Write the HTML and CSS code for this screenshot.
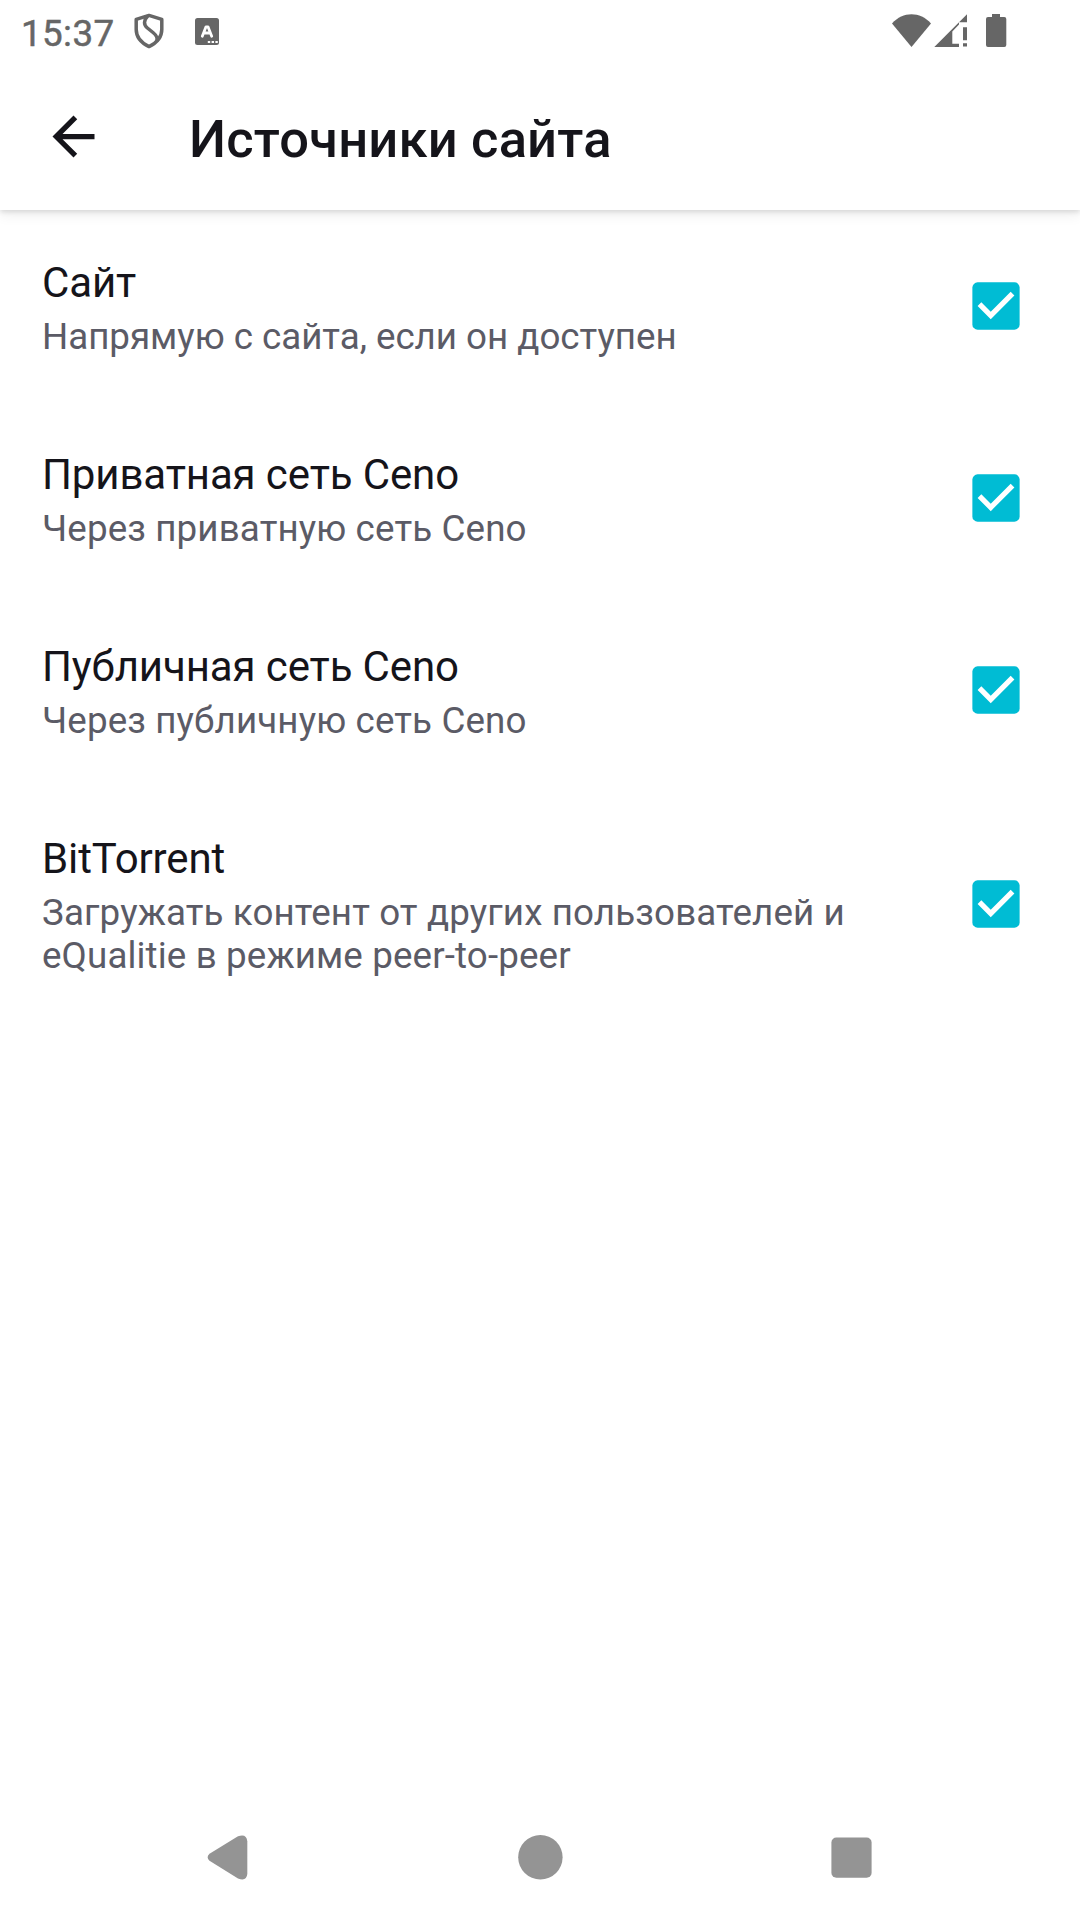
FILE: index.html
```html
<!DOCTYPE html>
<html lang="ru">
<head>
<meta charset="utf-8">
<title>Источники сайта</title>
<link rel="stylesheet" href="styles.css">
</head>
<body>
<div class="screen">
  <div class="status-bar">
    <span class="clock">15:37</span>
    <svg class="status-shield" viewBox="0 0 32 36">
      <path d="M16 2.4 28.8 6.4V16.5C28.8 24 23.5 30 16 33.6 8.5 30 3.2 24 3.2 16.5V6.4Z"/>
      <path d="M14.8 2.8C10.6 7.5 10.4 11.5 14.4 15L20 19.5C24 22.8 25 25.5 23.6 28.3"/>
    </svg>
    <svg class="status-app" viewBox="0 0 24 27">
      <rect width="24" height="27" rx="2.5" fill="#666"/>
      <path d="M7.3 18.2 11 8.8H13L16.7 18.2M8.8 15H15.2" fill="none" stroke="#fff" stroke-width="2.8" stroke-linecap="round" stroke-linejoin="round"/>
      <path d="M12.8 23h2.4v2h-2.4zM16.6 23h2.4v2h-2.4zM20.4 23h2.4v2h-2.4z" fill="#fff"/>
    </svg>
    <svg class="status-system" viewBox="0 0 116 34">
      <path d="M0 9.500C11-2.7 28-2.7 39 9.5L19.5 33Z"/>
      <path d="M42.3 33 75 .2V8.3H67V10.5L60.3 17.5V29.7H67V33Z"/>
      <path d="M71 13.3h4v13h-4zM71 29.3h4V32.5h-4z"/>
      <path d="M100 0h8v3h4.300q2 0 2 2V31q0 2-2 2H96q-2 0-2-2V5q0-2 2-2h4z"/>
    </svg>
  </div>
  <header class="toolbar">
    <svg class="back" viewBox="0 0 24 24"><path d="M20 11H7.83l5.59-5.59L12 4l-8 8 8 8 1.41-1.41L7.83 13H20z"/></svg>
    <h1 class="heading">Источники сайта</h1>
  </header>
  <main class="preferences">
    <div class="row">
      <div class="labels"><div class="title">Сайт</div><div class="summary summary-tight">Напрямую с сайта, если он доступен</div></div>
      <svg class="check" viewBox="-.14 -.14 18.280 18.280"><rect width="18" height="18" rx="2"/><path d="m7 14-5-5 1.41-1.41L7 11.17l7.59-7.59L16 5z"/></svg>
    </div>
    <div class="row">
      <div class="labels"><div class="title">Приватная сеть Ceno</div><div class="summary">Через приватную сеть Ceno</div></div>
      <svg class="check" viewBox="-.14 -.14 18.280 18.280"><rect width="18" height="18" rx="2"/><path d="m7 14-5-5 1.41-1.41L7 11.17l7.59-7.59L16 5z"/></svg>
    </div>
    <div class="row">
      <div class="labels"><div class="title">Публичная сеть Ceno</div><div class="summary">Через публичную сеть Ceno</div></div>
      <svg class="check" viewBox="-.14 -.14 18.280 18.280"><rect width="18" height="18" rx="2"/><path d="m7 14-5-5 1.41-1.41L7 11.17l7.59-7.59L16 5z"/></svg>
    </div>
    <div class="row">
      <div class="labels"><div class="title">BitTorrent</div><div class="summary">Загружать контент от других пользователей и eQualitie в режиме peer-to-peer</div></div>
      <svg class="check" viewBox="-.14 -.14 18.280 18.280"><rect width="18" height="18" rx="2"/><path d="m7 14-5-5 1.41-1.41L7 11.17l7.59-7.59L16 5z"/></svg>
    </div>
  </main>
  <nav class="nav-bar">
    <svg viewBox="0 0 48 48"><path d="M34 1.2 5.5 18.8Q1.7 22.3 5.5 25.7L34 43.4Q42.5 46.8 43.3 39V6.2Q42.5-1.8 34 1.2Z"/></svg>
    <svg viewBox="0 0 48 48"><circle cx="24.4" cy="22.3" r="22.2"/></svg>
    <svg viewBox="0 0 48 48"><rect x="3.4" y="2.5" width="40.2" height="40.2" rx="5"/></svg>
  </nav>
</div>
</body>
</html>
```
FILE: styles.css
```css
* { box-sizing: border-box; }
body { margin: 0; background: #fff; font-family: Roboto, sans-serif; }
svg { display: block; flex: none; overflow: visible; }
.screen { display: flex; flex-direction: column; width: 1080px; height: 1920px; overflow: hidden; }
.status-bar { display: flex; align-items: flex-start; height: 63px; padding: 14px 72px 0 21px; color: #666; }
.clock { width: 112px; margin-top: -2px; font-size: 36.75px; line-height: 43px; letter-spacing: .4px; -webkit-text-stroke: .5px #666; }
.status-shield { width: 32px; height: 36px; margin-top: -1px; fill: none; stroke: #666; stroke-width: 3.5; stroke-linejoin: round; }
.status-app { width: 24px; height: 27px; margin: 4px 0 0 30px; }
.status-system { width: 116px; height: 34px; margin-left: auto; fill: #666; }
.toolbar { display: flex; flex: none; align-items: center; height: 147px; padding-left: 42px; box-shadow: 0 2px 5px rgba(0, 0, 0, .12), 0 6px 12px rgba(0, 0, 0, .06); clip-path: inset(0 0 -24px); }
.back { width: 63px; height: 63px; fill: #15141a; }
.heading { margin: 4px 0 0 84px; color: #15141a; font-size: 52.5px; font-weight: 500; line-height: 62px; letter-spacing: .18px; }
.preferences { flex: 1; }
.row { display: flex; align-items: center; justify-content: space-between; min-height: 192px; padding: 44.5px 60px 44.5px 42px; }
.labels { width: 830px; }
.title { margin-bottom: 4px; color: #15141a; font-size: 42px; line-height: 56px; letter-spacing: -.12px; }
.summary { color: #5b5b66; font-size: 36.75px; line-height: 43px; letter-spacing: .12px; }
.summary-tight { letter-spacing: -.03px; }
.check { width: 48px; height: 48px; fill: #00bcd4; }
.check path { fill: #fff; }
.nav-bar { display: flex; gap: 264px; justify-content: center; height: 126px; padding-top: 41px; fill: #949494; }
.nav-bar svg { width: 48px; height: 48px; }
```
